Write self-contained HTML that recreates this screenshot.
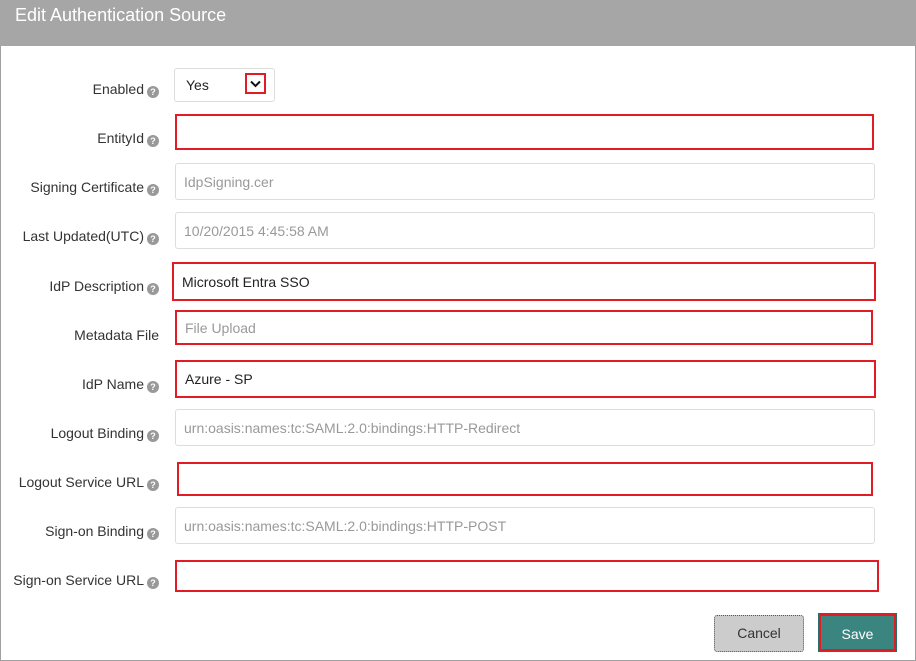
<!DOCTYPE html>
<html><head><style>
body{margin:0;width:916px;height:661px;background:#fff;font-family:"Liberation Sans",sans-serif;position:relative;overflow:hidden}
.hdr{position:absolute;left:0;top:0;width:916px;height:46px;background:#a6a6a6;color:#fff;font-size:18px;line-height:30px;padding-left:15px;box-sizing:border-box}
.frame{position:absolute;left:0;top:46px;width:916px;height:615px;border:1px solid #a0a0a0;border-top:none;box-sizing:border-box}
.lbl{position:absolute;right:757px;font-size:14px;color:#333;white-space:nowrap}
.q{display:inline-block;width:12px;height:12px;border-radius:50%;background:#999;color:#fff;font-size:9px;line-height:12px;text-align:center;font-weight:bold;margin-left:3px;vertical-align:-1px}
.box{position:absolute;box-sizing:border-box;font-size:14px;padding-left:8px;display:flex;align-items:center}
.g{border:1px solid #ddd;border-radius:3px;color:#999}
.r{border:2px solid #e21c24;color:#222}
</style></head><body>
<div class="hdr">Edit Authentication Source</div>
<div class="frame"></div>

<div class="lbl" style="top:81px">Enabled<span class="q">?</span></div>
<div class="box g" style="left:174px;top:68px;width:101px;height:34px;color:#222;padding-left:11px">Yes</div>
<div class="box r" style="left:245px;top:73px;width:21px;height:21px;padding:0;justify-content:center"><svg width="11" height="8"><path d="M1 1.5L5.5 6L10 1.5" stroke="#111" stroke-width="2" fill="none"/></svg></div>

<div class="lbl" style="top:130px">EntityId<span class="q">?</span></div>
<div class="box r" style="left:175px;top:114px;width:699px;height:36px"></div>

<div class="lbl" style="top:179px">Signing Certificate<span class="q">?</span></div>
<div class="box g" style="left:175px;top:163px;width:700px;height:37px">IdpSigning.cer</div>

<div class="lbl" style="top:228px">Last Updated(UTC)<span class="q">?</span></div>
<div class="box g" style="left:175px;top:212px;width:700px;height:37px">10/20/2015 4:45:58 AM</div>

<div class="lbl" style="top:278px">IdP Description<span class="q">?</span></div>
<div class="box r" style="left:172px;top:262px;width:704px;height:39px">Microsoft Entra SSO</div>

<div class="lbl" style="top:327px">Metadata File</div>
<div class="box r" style="left:175px;top:310px;width:698px;height:35px;color:#999">File Upload</div>

<div class="lbl" style="top:376px">IdP Name<span class="q">?</span></div>
<div class="box r" style="left:175px;top:360px;width:701px;height:38px">Azure - SP</div>

<div class="lbl" style="top:425px">Logout Binding<span class="q">?</span></div>
<div class="box g" style="left:175px;top:409px;width:700px;height:37px">urn:oasis:names:tc:SAML:2.0:bindings:HTTP-Redirect</div>

<div class="lbl" style="top:474px">Logout Service URL<span class="q">?</span></div>
<div class="box r" style="left:177px;top:462px;width:696px;height:34px"></div>

<div class="lbl" style="top:523px">Sign-on Binding<span class="q">?</span></div>
<div class="box g" style="left:175px;top:507px;width:700px;height:37px">urn:oasis:names:tc:SAML:2.0:bindings:HTTP-POST</div>

<div class="lbl" style="top:572px">Sign-on Service URL<span class="q">?</span></div>
<div class="box r" style="left:175px;top:560px;width:704px;height:32px"></div>

<div style="position:absolute;left:714px;top:615px;width:90px;height:37px;background:#ccc;border:1px dotted #555;box-sizing:border-box;border-radius:3px;font-size:14px;color:#333;text-align:center;line-height:35px">Cancel</div>
<div style="position:absolute;left:819px;top:614px;width:77px;height:37px;background:#3b8581;border:2px solid #e21c24;outline:1px solid #2b6d6a;box-sizing:border-box;font-size:14px;color:#fff;text-align:center;line-height:36px">Save</div>
</body></html>
